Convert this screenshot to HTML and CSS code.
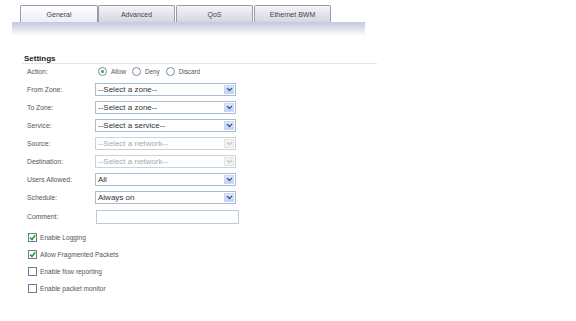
FILE: index.html
```html
<!DOCTYPE html>
<html>
<head>
<meta charset="utf-8">
<link rel="stylesheet" href="styles.css">
</head>
<body>
<div class="page">
  <div class="tabs">
    <div class="tab active">General</div>
    <div class="tab">Advanced</div>
    <div class="tab">QoS</div>
    <div class="tab">Ethernet BWM</div>
  </div>
  <div class="bar"></div>
  <div class="section">
    <div class="heading">Settings</div>
    <div class="form">
      <div class="label">Action:</div>
      <div class="radios">
        <span class="radio on"></span><span class="rtext">Allow</span>
        <span class="radio"></span><span class="rtext">Deny</span>
        <span class="radio"></span><span class="rtext">Discard</span>
      </div>
      <div class="label">From Zone:</div>
      <div class="select"><span class="val">--Select a zone--</span><span class="arrow"><svg width="7" height="5" viewBox="0 0 7 5"><path d="M1 1 L3.5 3.5 L6 1" fill="none" stroke="#3d5a99" stroke-width="1.4"/></svg></span></div>
      <div class="label">To Zone:</div>
      <div class="select"><span class="val">--Select a zone--</span><span class="arrow"><svg width="7" height="5" viewBox="0 0 7 5"><path d="M1 1 L3.5 3.5 L6 1" fill="none" stroke="#3d5a99" stroke-width="1.4"/></svg></span></div>
      <div class="label">Service:</div>
      <div class="select"><span class="val">--Select a service--</span><span class="arrow"><svg width="7" height="5" viewBox="0 0 7 5"><path d="M1 1 L3.5 3.5 L6 1" fill="none" stroke="#3d5a99" stroke-width="1.4"/></svg></span></div>
      <div class="label">Source:</div>
      <div class="select disabled"><span class="val">--Select a network--</span><span class="arrow"><svg width="7" height="5" viewBox="0 0 7 5"><path d="M1 1 L3.5 3.5 L6 1" fill="none" stroke="#c8c8c8" stroke-width="1.4"/></svg></span></div>
      <div class="label">Destination:</div>
      <div class="select disabled"><span class="val">--Select a network--</span><span class="arrow"><svg width="7" height="5" viewBox="0 0 7 5"><path d="M1 1 L3.5 3.5 L6 1" fill="none" stroke="#c8c8c8" stroke-width="1.4"/></svg></span></div>
      <div class="label">Users Allowed:</div>
      <div class="select"><span class="val">All</span><span class="arrow"><svg width="7" height="5" viewBox="0 0 7 5"><path d="M1 1 L3.5 3.5 L6 1" fill="none" stroke="#3d5a99" stroke-width="1.4"/></svg></span></div>
      <div class="label">Schedule:</div>
      <div class="select"><span class="val">Always on</span><span class="arrow"><svg width="7" height="5" viewBox="0 0 7 5"><path d="M1 1 L3.5 3.5 L6 1" fill="none" stroke="#3d5a99" stroke-width="1.4"/></svg></span></div>
      <div class="label comment">Comment:</div>
      <div class="input"></div>
    </div>
    <div class="checks">
      <div class="check"><span class="box"><svg width="7" height="7" viewBox="0 0 7 7"><path d="M1 3.5 L3 5.5 L6.2 1.2" fill="none" stroke="#21a121" stroke-width="1.5"/></svg></span><span>Enable Logging</span></div>
      <div class="check"><span class="box"><svg width="7" height="7" viewBox="0 0 7 7"><path d="M1 3.5 L3 5.5 L6.2 1.2" fill="none" stroke="#21a121" stroke-width="1.5"/></svg></span><span>Allow Fragmented Packets</span></div>
      <div class="check"><span class="box"></span><span>Enable flow reporting</span></div>
      <div class="check"><span class="box"></span><span>Enable packet monitor</span></div>
    </div>
  </div>
</div>
</body>
</html>
```

FILE: styles.css
```css
html, body {
  margin: 0;
  padding: 0;
  background: #fff;
}
.page {
  width: 576px;
  height: 321px;
  font-family: "Liberation Sans", Arial, sans-serif;
  color: #444;
  font-size: 7px;
}
.tabs {
  display: flex;
  margin-left: 20px;
  padding-top: 5px;
  height: 17px;
}
.tab {
  width: 75px;
  height: 16px;
  border: 1px solid #9c9ca8;
  border-bottom: none;
  border-radius: 2px 2px 0 0;
  background: linear-gradient(#f4f4f8, #d4d6e2);
  display: flex;
  align-items: center;
  justify-content: center;
  font-size: 7px;
  color: #444;
  margin-right: 1px;
}
.tab.active {
  background: linear-gradient(#ffffff, #eceef6);
  margin-right: 0;
  width: 76px;
}
.bar {
  margin-left: 12px;
  width: 353px;
  height: 14px;
  background: linear-gradient(#c4c8dc, #eceef4 70%, #ffffff);
}
.section {
  margin-left: 22px;
  padding-top: 18px;
}
.heading {
  font-weight: bold;
  font-size: 8px;
  color: #222;
  padding-left: 2px;
  width: 353px;
  border-bottom: 1px solid #e4e4e8;
  line-height: 9px;
}
.form {
  display: grid;
  grid-template-columns: 68px 145px;
  grid-template-rows: 17px;
  grid-auto-rows: 18px;
  margin-left: 5px;
  margin-top: -1px;
  align-items: center;
}
.label {
  font-size: 6.8px;
  color: #555;
}
.label.comment {
  margin-top: 2px;
}
.radios {
  display: flex;
  align-items: center;
  margin-left: 3px;
}
.radio {
  width: 7px;
  height: 7px;
  border: 1px solid #7a8aa6;
  border-radius: 50%;
  background: #fff;
  position: relative;
  margin-right: 4px;
}
.radio.on::after {
  content: "";
  position: absolute;
  left: 2px;
  top: 2px;
  width: 3px;
  height: 3px;
  border-radius: 50%;
  background: #2fb32f;
}
.rtext {
  font-size: 6.3px;
  margin-right: 6px;
  color: #555;
}
.select {
  width: 139px;
  height: 11px;
  border: 1px solid #a8bdd0;
  display: flex;
  align-items: center;
  justify-content: space-between;
  background: #fff;
}
.select .val {
  font-size: 8px;
  padding-left: 2px;
  color: #333;
}
.select .arrow {
  width: 10px;
  height: 9px;
  margin-right: 1px;
  background: linear-gradient(#dfe8fa, #c2d3f2);
  border: 1px solid #c9d6ee;
  box-sizing: border-box;
  display: flex;
  align-items: center;
  justify-content: center;
}
.select.disabled {
  border-color: #c8d2dc;
}
.select.disabled .val {
  color: #a8a8a8;
}
.select.disabled .arrow {
  background: #f4f4f4;
  border-color: #e4e4e4;
}
.input {
  width: 141px;
  height: 12px;
  border: 1px solid #b8ccd8;
  margin-left: 1px;
  margin-top: 4px;
}
.checks {
  margin-top: 8px;
  margin-left: 6px;
  display: flex;
  flex-direction: column;
  gap: 7px;
}
.check {
  display: flex;
  align-items: center;
  height: 10px;
  font-size: 6.6px;
  color: #555;
}
.box {
  width: 7px;
  height: 7px;
  border: 1px solid #6b7b95;
  background: #fff;
  margin-right: 3px;
  display: flex;
  align-items: center;
  justify-content: center;
}
```
